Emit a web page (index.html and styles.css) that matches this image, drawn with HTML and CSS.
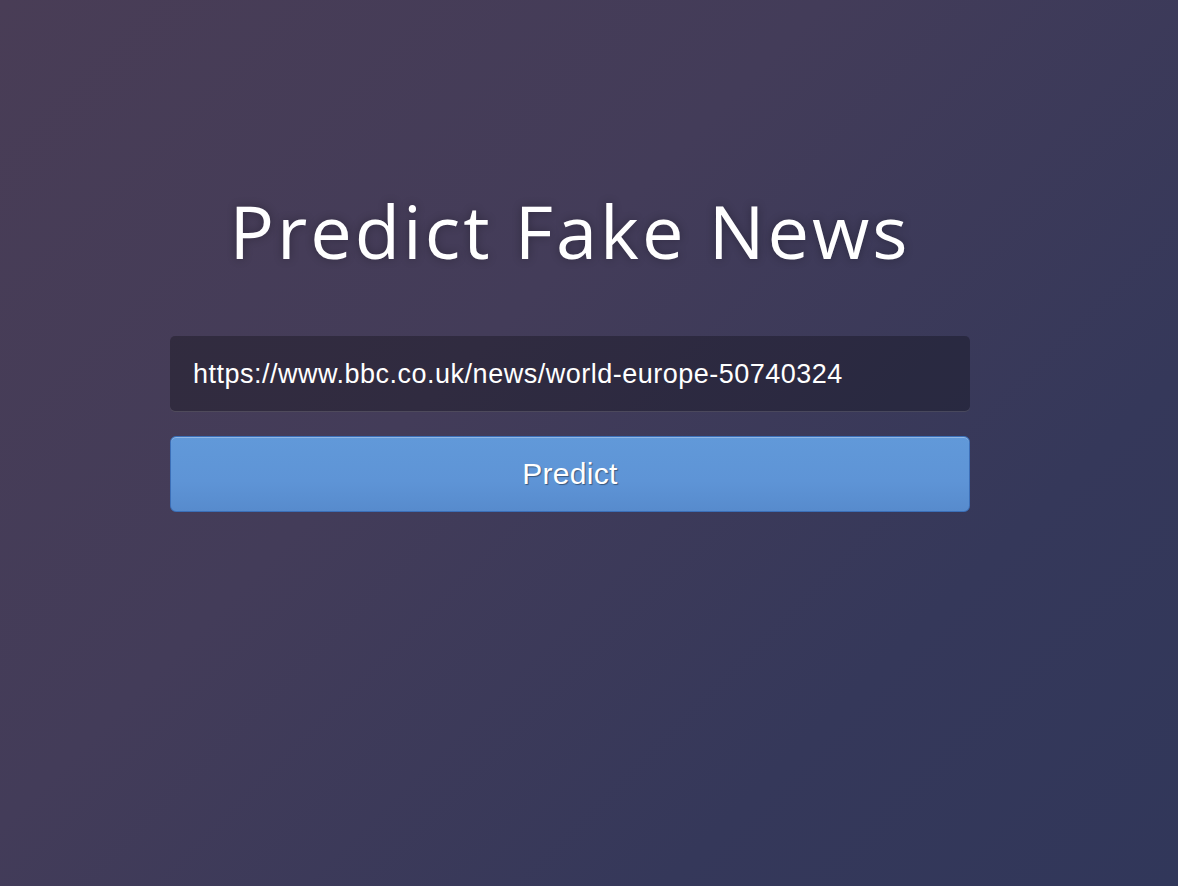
FILE: index.html
```html
<!DOCTYPE html>
<html>
<head>
<meta charset="utf-8">
<link rel="stylesheet" href="styles.css">
</head>
<body>
<main class="login">
  <h1 class="title">Predict Fake News</h1>
  <form class="form">
    <input class="url" type="text" value="https://www.bbc.co.uk/news/world-europe-50740324">
    <button class="btn" type="button">Predict</button>
  </form>
</main>
</body>
</html>
```

FILE: styles.css
```css
html, body {
  margin: 0;
  height: 100%;
}
body {
  box-sizing: border-box;
  padding-right: 38px;
  background: linear-gradient(135deg, #493d56 0%, #433c59 40%, #35385a 75%, #31375a 100%);
  font-family: "Liberation Sans", Arial, sans-serif;
  overflow: hidden;
}
.login {
  width: 800px;
  margin: 0 auto;
  padding-top: 183px;
  display: flex;
  flex-direction: column;
  align-items: center;
}
.title {
  margin: 0;
  font-family: "Open Sans", sans-serif;
  font-weight: 400;
  font-size: 74px;
  line-height: 96px;
  letter-spacing: 3px;
  color: #ffffff;
  text-shadow: 0 0 10px rgba(0,0,0,0.3);
}
.form {
  width: 100%;
  margin-top: 57px;
  display: flex;
  flex-direction: column;
  gap: 24px;
}
.url {
  box-sizing: border-box;
  width: 100%;
  height: 76px;
  padding: 0 23px;
  border: none;
  border-radius: 5px;
  background: rgba(0,0,0,0.28);
  color: #fff;
  font-family: "Liberation Sans", Arial, sans-serif;
  font-size: 27px;
  letter-spacing: 0.5px;
  outline: none;
  box-shadow: inset 0 -1px 0 rgba(255,255,255,0.15);
}
.btn {
  box-sizing: border-box;
  width: 100%;
  height: 76px;
  border: 1px solid #3b6fb8;
  border-radius: 6px;
  background: linear-gradient(to bottom, #6199d9 0%, #5e94d6 60%, #578bcd 100%);
  color: #fff;
  font-family: "Liberation Sans", Arial, sans-serif;
  font-size: 30px;
  letter-spacing: 0.3px;
  text-shadow: 1px 1px 1px rgba(0,0,0,0.4);
  box-shadow: inset 0 1px 0 rgba(255,255,255,0.3);
  cursor: pointer;
}
```
